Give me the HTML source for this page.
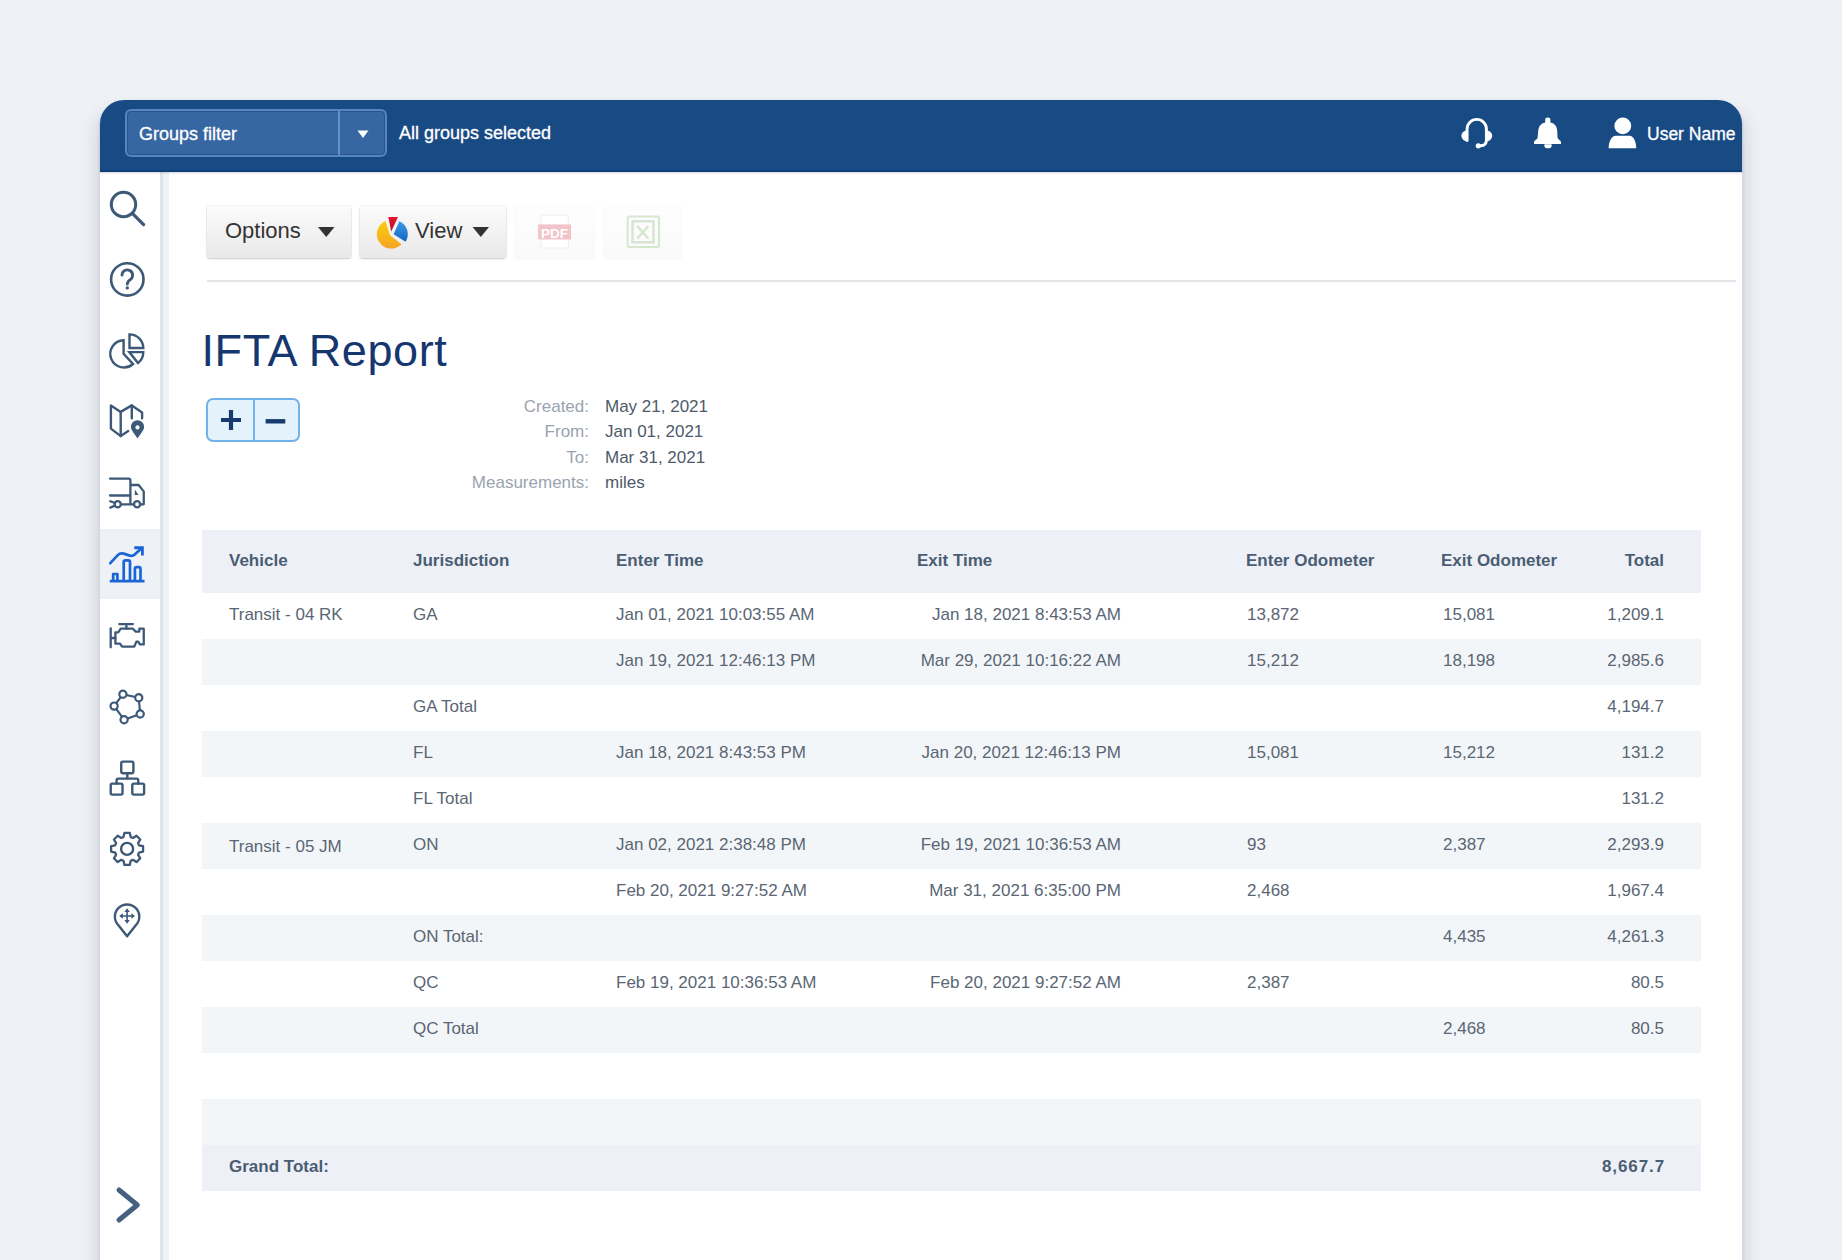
<!DOCTYPE html>
<html><head><meta charset="utf-8">
<style>
*{box-sizing:border-box;margin:0;padding:0}
html,body{width:1842px;height:1260px;overflow:hidden;background:#eef1f6;font-family:"Liberation Sans",sans-serif}
.abs{position:absolute}
#win{position:absolute;left:100px;top:100px;width:1642px;height:1200px;background:#fff;border-radius:24px 24px 0 0;box-shadow:-8px 8px 18px -4px rgba(50,60,80,0.13),8px 8px 18px -4px rgba(50,60,80,0.13),-2px 4px 4px -1px rgba(50,60,80,0.07),2px 4px 4px -1px rgba(50,60,80,0.07)}
#top{position:absolute;left:0;top:0;width:1642px;height:72px;background:#184a84;border-radius:24px 24px 0 0;box-shadow:inset 0 -2px 0 #0f3f7b,0 1px 2px rgba(30,40,60,0.22);z-index:2}
#gf{position:absolute;left:25px;top:9px;width:262px;height:48px;background:#3767a3;border:2px solid #5585bf;border-radius:6px;box-shadow:inset 0 0 0 1px rgba(20,50,100,0.35)}
#gfdiv{position:absolute;left:211px;top:0;width:2px;height:44px;background:#6790c4}
.wt{color:#fff;font-size:18px;position:absolute;white-space:nowrap;line-height:20px;-webkit-text-stroke:0.3px #fff}
#side{position:absolute;left:0;top:72px;width:60px;height:1128px;background:#fff}
#stripe1{position:absolute;left:60px;top:72px;width:3px;height:1128px;background:#dfe4eb}
#stripe2{position:absolute;left:63px;top:72px;width:6px;height:1128px;background:#edf1f8}
#active{position:absolute;left:0;top:429px;width:60px;height:70px;background:#eef1f6}
.ic{position:absolute;left:0;width:60px;height:60px}
.btn{position:absolute;top:106px;height:52px;border-radius:3px;background:linear-gradient(#fbfbfb,#e9e9e9);box-shadow:0 1px 2px rgba(0,0,0,0.18),0 0 0 1px rgba(0,0,0,0.04)}
.btxt{position:absolute;font-size:22px;color:#333;white-space:nowrap;line-height:24px}
#sep{position:absolute;left:107px;top:180px;width:1529px;height:2px;background:#e3e5e9;box-shadow:0 1px 1px rgba(0,0,0,0.025)}
#title{position:absolute;left:101.5px;top:225px;font-size:45px;letter-spacing:0.6px;color:#15366f;white-space:nowrap;line-height:52px}
#pm{position:absolute;left:106px;top:298px;width:94px;height:44px;border:2px solid #72b2e8;border-radius:7px;background:#e4f2fb}
#pmdiv{position:absolute;left:45px;top:0;width:2px;height:40px;background:#72b2e8}
.ml{position:absolute;font-size:17px;color:#9aa4b0;white-space:nowrap;text-align:right;width:200px;line-height:20px;margin-top:1px;margin-left:1px}
.mv{position:absolute;font-size:17px;color:#4e5a69;white-space:nowrap;line-height:20px;margin-top:1px}
#tbl{position:absolute;left:102px;top:430px;width:1499px}
.row{position:relative;height:46px;width:1499px}
.row span{position:absolute;top:0;line-height:44px;font-size:17px;color:#5a6674;white-space:nowrap}
.hd{height:63px;background:#edf1f7}
.hd span{line-height:61px;font-weight:bold;color:#4b5d72}
.g{background:#f3f6f8}
.gt{background:#edf1f7}
.gt span{font-weight:bold;color:#4b5d72}
</style></head><body>
<div id="win">
  <div id="top">
    <div id="gf"><div id="gfdiv"></div>
      <div class="wt" style="left:12px;top:13px">Groups filter</div>
      <svg class="abs" style="left:230px;top:19px" width="12" height="9" viewBox="0 0 12 9"><path d="M0.5 0.5 L11.5 0.5 L6 8 Z" fill="#fff"/></svg>
    </div>
    <div class="wt" style="left:299px;top:23px">All groups selected</div>
    <div class="wt" style="left:1547px;top:23.5px;font-size:17.5px">User Name</div>
  </div>
  <div id="side"></div><div id="stripe1"></div><div id="stripe2"></div>
  <div id="active"></div>

  <div class="btn" style="left:107px;width:144px"><div class="btxt" style="left:18px;top:13px">Options</div></div>
  <div class="btn" style="left:260px;width:146px"><div class="btxt" style="left:55px;top:13px">View</div></div>
  <div class="btn" style="left:415px;width:79px;opacity:0.22"></div>
  <div class="btn" style="left:504px;width:77px;opacity:0.22"></div>
  <div id="sep"></div>
  <div id="title">IFTA Report</div>
  <div id="pm"><div id="pmdiv"></div></div>

  <div class="ml" style="left:288px;top:296px">Created:</div>
  <div class="ml" style="left:288px;top:321px">From:</div>
  <div class="ml" style="left:288px;top:347px">To:</div>
  <div class="ml" style="left:288px;top:372px">Measurements:</div>
  <div class="mv" style="left:505px;top:296px">May 21, 2021</div>
  <div class="mv" style="left:505px;top:321px">Jan 01, 2021</div>
  <div class="mv" style="left:505px;top:347px">Mar 31, 2021</div>
  <div class="mv" style="left:505px;top:372px">miles</div>

  <div id="tbl">
<div class="row hd"><span style="left:27px">Vehicle</span><span style="left:211px">Jurisdiction</span><span style="left:414px">Enter Time</span><span style="left:715px">Exit Time</span><span style="left:1044px">Enter Odometer</span><span style="left:1239px">Exit Odometer</span><span style="right:37px">Total</span></div>
<div class="row "><span style="left:27px">Transit - 04 RK</span><span style="left:211px">GA</span><span style="left:414px">Jan 01, 2021 10:03:55 AM</span><span style="right:580px">Jan 18, 2021 8:43:53 AM</span><span style="left:1045px">13,872</span><span style="left:1241px">15,081</span><span style="right:37px">1,209.1</span></div>
<div class="row g"><span style="left:414px">Jan 19, 2021 12:46:13 PM</span><span style="right:580px">Mar 29, 2021 10:16:22 AM</span><span style="left:1045px">15,212</span><span style="left:1241px">18,198</span><span style="right:37px">2,985.6</span></div>
<div class="row "><span style="left:211px">GA Total</span><span style="right:37px">4,194.7</span></div>
<div class="row g"><span style="left:211px">FL</span><span style="left:414px">Jan 18, 2021 8:43:53 PM</span><span style="right:580px">Jan 20, 2021 12:46:13 PM</span><span style="left:1045px">15,081</span><span style="left:1241px">15,212</span><span style="right:37px">131.2</span></div>
<div class="row "><span style="left:211px">FL Total</span><span style="right:37px">131.2</span></div>
<div class="row g"><span style="left:27px;top:2px">Transit - 05 JM</span><span style="left:211px">ON</span><span style="left:414px">Jan 02, 2021 2:38:48 PM</span><span style="right:580px">Feb 19, 2021 10:36:53 AM</span><span style="left:1045px">93</span><span style="left:1241px">2,387</span><span style="right:37px">2,293.9</span></div>
<div class="row "><span style="left:414px">Feb 20, 2021 9:27:52 AM</span><span style="right:580px">Mar 31, 2021 6:35:00 PM</span><span style="left:1045px">2,468</span><span style="right:37px">1,967.4</span></div>
<div class="row g"><span style="left:211px">ON Total:</span><span style="left:1241px">4,435</span><span style="right:37px">4,261.3</span></div>
<div class="row "><span style="left:211px">QC</span><span style="left:414px">Feb 19, 2021 10:36:53 AM</span><span style="right:580px">Feb 20, 2021 9:27:52 AM</span><span style="left:1045px">2,387</span><span style="right:37px">80.5</span></div>
<div class="row g"><span style="left:211px">QC Total</span><span style="left:1241px">2,468</span><span style="right:37px">80.5</span></div>
<div class="row"></div>
<div class="row g"></div>
<div class="row gt"><span style="left:27px">Grand Total:</span><span style="right:36px;letter-spacing:0.9px">8,667.7</span></div>
  </div>
</div>
<svg id="icons" style="position:absolute;left:0;top:0;pointer-events:none;z-index:5" width="1842" height="1260">
<g fill="none" stroke="#3d5977" stroke-width="2.5" stroke-linecap="round" stroke-linejoin="round">
  <!-- search -->
  <circle cx="123.5" cy="204.5" r="12.2" stroke-width="3"/>
  <path d="M132.6 213.6 L143.6 224.6" stroke-width="3.2"/>
  <!-- help -->
  <circle cx="127.3" cy="279.4" r="16.2" stroke-width="2.6"/>
  <path d="M122 275.2 A5.3 5.3 0 1 1 130.6 279.3 C128.3 280.8 127.3 281.9 127.3 284.2" stroke-width="2.8"/>
  <circle cx="127.3" cy="287.9" r="1.7" fill="#3d5977" stroke="none"/>
  <!-- pie -->
  <path d="M123.6 340.3 V353.7 L133.0 364.0 A13.6 13.6 0 1 1 123.6 340.3 Z" stroke-linejoin="miter" stroke-width="2.4"/>
  <path d="M129.5 334.4 V348 H143.3 A13.7 13.7 0 0 0 129.5 334.4 Z" stroke-linejoin="miter" stroke-width="2.4"/>
  <path d="M129.3 352.1 H143.3 A14 14 0 0 1 138.0 363.1 Z" stroke-linejoin="miter" stroke-width="2.4"/>
  <!-- map -->
  <path d="M128.2 431.1 L120.7 436.1 L110.9 428.6 V405.4 L120.7 411.9 L131.8 405.4 L142.1 412.6 V418.3" stroke-width="2.4"/>
  <path d="M120.7 411.9 V436.1 M131.8 405.4 V418.3" stroke-width="2.4"/>
  <!-- truck -->
  <path d="M110 478.6 H128.6 Q130.4 478.6 130.4 480.4 V503.9" stroke-width="2.3"/>
  <path d="M110 495.5 H130" stroke-width="2.3"/>
  <path d="M131 485 H138.6 L143.75 491.4 V504.3 H140.3" stroke-width="2.3"/>
  <path d="M121 504.3 H134" stroke-width="2.3"/>
  <circle cx="117.7" cy="504.3" r="3.1" stroke-width="2.3"/>
  <circle cx="137.1" cy="504.3" r="3.1" stroke-width="2.3"/>
  <path d="M110.3 501.2 L115 503 M110.3 507.6 L115 505.6" stroke-width="2.3"/>
  <!-- engine -->
  <path d="M110.7 628.4 V647.3 M110.7 638 H115.4 M119.3 624.1 H132.9 M126.4 624.1 V628.7" stroke-width="2.3"/>
  <path d="M115.4 643.7 V632.3 H118.2 L120.7 628.7 H132.9 L135.7 631.6 H139.3 V628.7 H143.75 V644.4 H140 L138.2 641.6 H136.4 L134.3 646.6 H122.1 L120 643.7 Z" stroke-width="2.3"/>
  <!-- network -->
  <path d="M122.9 694.2 L138.75 697.75 L140.2 714 L124.1 719.7 L114.1 706.1 Z" stroke-width="2.2"/>
  <!-- hierarchy -->
  <rect x="121.25" y="761.6" width="12.15" height="11.6" rx="1.6" stroke-width="2.4"/>
  <rect x="110.7" y="783.6" width="11.8" height="11" rx="1.6" stroke-width="2.4"/>
  <rect x="132.3" y="783.6" width="11.8" height="11" rx="1.6" stroke-width="2.4"/>
  <path d="M127.3 773.2 V778.6 M116.6 783.6 V780.2 Q116.6 778.6 118.2 778.6 H136.8 Q138.2 778.6 138.2 780.2 V783.6" stroke-width="2.4"/>
  <!-- gear -->
  <path d="M123.47 837.04 L124.43 832.92 L129.77 832.92 L130.73 837.04 A12.4 12.4 0 0 1 132.92 837.95 L136.51 835.71 L140.29 839.49 L138.05 843.08 A12.4 12.4 0 0 1 138.96 845.27 L143.08 846.23 L143.08 851.57 L138.96 852.53 A12.4 12.4 0 0 1 138.05 854.72 L140.29 858.31 L136.51 862.09 L132.92 859.85 A12.4 12.4 0 0 1 130.73 860.76 L129.77 864.88 L124.43 864.88 L123.47 860.76 A12.4 12.4 0 0 1 121.28 859.85 L117.69 862.09 L113.91 858.31 L116.15 854.72 A12.4 12.4 0 0 1 115.24 852.53 L111.12 851.57 L111.12 846.23 L115.24 845.27 A12.4 12.4 0 0 1 116.15 843.08 L113.91 839.49 L117.69 835.71 L121.28 837.95 A12.4 12.4 0 0 1 123.47 837.04 Z" stroke-width="2.3"/>
  <circle cx="127.1" cy="848.9" r="6.0" stroke-width="2.4"/>
  <!-- pin -->
  <path d="M127.1 936.3 L118.2 925 A12.2 12.2 0 1 1 136 925 Z" stroke-width="2.4"/>
  <path d="M127.1 911 V921 M122 916 H132.2" stroke-width="1.6"/>
  <!-- chevron -->
  <path d="M119 1190 L137.3 1205 L119 1220" stroke="#46617f" stroke-width="5"/>
</g>
<g fill="#fff" stroke="#3d5977" stroke-width="2.2">
  <circle cx="122.9" cy="694.2" r="3.6"/>
  <circle cx="138.75" cy="697.75" r="3.6"/>
  <circle cx="140.2" cy="714" r="3.6"/>
  <circle cx="124.1" cy="719.7" r="3.6"/>
  <circle cx="114.1" cy="706.1" r="3.6"/>
</g>
<!-- map pin filled -->
<path d="M137.5 439.6 L132 431.5 A7.2 7.2 0 1 1 143 431.5 Z" fill="#3d5977" stroke="#fff" stroke-width="1.2"/>
<circle cx="137.5" cy="427.4" r="2.1" fill="#fff"/>
<!-- truck window -->
<path d="M134.8 489.5 L138.6 494.9 H134.8 Z" fill="#3d5977"/>
<!-- pin arrows -->
<g fill="#3d5977">
  <path d="M127.1 908.3 L124.4 912 H129.8 Z M127.1 923.8 L124.4 920 H129.8 Z M119.2 916 L122.8 913.3 V918.7 Z M135 916 L131.4 913.3 V918.7 Z"/>
</g>
<!-- chart (active) -->
<g fill="none" stroke="#1a66d6" stroke-width="2.7" stroke-linejoin="round" stroke-linecap="round">
  <path d="M109.8 581.2 H144.5" stroke-linecap="butt"/>
  <path d="M113.2 580 V574 H117.4 V580"/>
  <path d="M123.7 580 V562 Q123.7 560.3 125.4 560.3 H128.3 Q130 560.3 130 562 V580"/>
  <path d="M134.9 580 V568.8 Q134.9 567.2 136.5 567.2 H139 Q140.5 567.2 140.5 568.8 V580"/>
  <path d="M110.3 563.2 L117.8 555.2 Q120.2 552.6 123.6 553.6 L129.8 555.6 Q132.6 556.6 134.7 554.5 L141.8 548"/>
</g>
<path d="M134.3 546.3 H143.8 V555.6 L141 555.6 V549.2 H134.3 Z" fill="#1a66d6"/>
</svg>
<svg id="icons2" style="position:absolute;left:0;top:0;pointer-events:none;z-index:5" width="1842" height="1260">
<!-- headset -->
<g fill="none" stroke="#fff" stroke-width="2.9" stroke-linecap="round">
  <path d="M1467.1 140.5 V129 A9.65 9.65 0 0 1 1486.4 129 V140 Q1486.4 145.7 1480.6 145.7 H1478.5"/>
</g>
<path d="M1467.8 130.3 C1464 130.3 1461.4 133.2 1461.4 135.8 C1461.4 138.6 1464 141.5 1467.8 141.5 Z" fill="#fff"/>
<path d="M1485.8 130.3 C1489.6 130.3 1492.2 133.2 1492.2 135.8 C1492.2 138.6 1489.6 141.5 1485.8 141.5 Z" fill="#fff"/>
<circle cx="1478.3" cy="145.8" r="2.6" fill="#fff"/>
<!-- bell -->
<path d="M1545.2 122.5 V120 Q1545.2 117.6 1547.8 117.6 Q1550.4 117.6 1550.4 120 V122.5 C1555 123.5 1557 126.5 1557.2 131 L1557.6 138 C1558 139.5 1561 140.5 1561 142 V144 H1534 V142 C1534 140.5 1537.2 139.5 1537.6 138 L1538.2 131 C1538.6 126.5 1540.6 123.5 1545.2 122.5 Z" fill="#fff"/>
<path d="M1544.4 144.2 H1551.6 V146 Q1551.6 148.3 1548 148.3 Q1544.4 148.3 1544.4 146 Z" fill="#fff"/>
<!-- user -->
<circle cx="1622.8" cy="125.9" r="8.4" fill="#fff"/>
<path d="M1615.6 135.7 H1629.8 C1633 135.7 1636.2 141 1636.2 148.2 H1608.6 C1608.6 141 1612 135.7 1615.6 135.7 Z" fill="#fff"/>
<!-- options arrow -->
<path d="M318 227 H334.5 L326.25 237 Z" fill="#333"/>
<path d="M472.6 227 H489 L480.8 237 Z" fill="#333"/>
<!-- view pie -->
<defs>
  <linearGradient id="gy" x1="0" y1="0" x2="0" y2="1"><stop offset="0" stop-color="#f6cf0a"/><stop offset="1" stop-color="#f7a326"/></linearGradient>
  <linearGradient id="gb" x1="0" y1="0" x2="0" y2="1"><stop offset="0" stop-color="#3d9be6"/><stop offset="1" stop-color="#1266c4"/></linearGradient>
  <linearGradient id="gr" x1="0" y1="0" x2="0" y2="1"><stop offset="0" stop-color="#ea1431"/><stop offset="1" stop-color="#b9101f"/></linearGradient>
</defs>
<path d="M385.57 220.94 L390 235.2 L401.56 244.2 A14.4 14.4 0 1 1 385.57 220.94 Z" fill="url(#gy)"/>
<path d="M388.3 217 H398 L391.2 231.5 Z" fill="url(#gr)"/>
<path d="M393.6 234.2 L399.38 221.23 A14.2 14.2 0 0 1 405.64 241.72 Z" fill="url(#gb)"/>
<!-- plus minus -->
<path d="M221 420 H241 M231 410 V430" stroke="#183b6e" stroke-width="4.2"/>
<path d="M265.6 421.3 H285.3" stroke="#183b6e" stroke-width="4.4"/>
</svg>
<svg id="icons3" style="position:absolute;left:0;top:0;pointer-events:none;z-index:5" width="1842" height="1260">
<rect x="541" y="215" width="27.3" height="33" fill="#fff" stroke="#eeeeee" stroke-width="1"/>
<rect x="538.1" y="224.4" width="32.9" height="15.1" fill="#f3c3ca"/>
<text x="554.6" y="237.6" text-anchor="middle" font-family="Liberation Sans" font-weight="bold" font-size="13.5" fill="#fff">PDF</text>
<rect x="627.7" y="216.5" width="31.3" height="30.5" rx="1.5" fill="none" stroke="#d5e8cd" stroke-width="2"/>
<rect x="632.5" y="221.3" width="21" height="21" fill="none" stroke="#d8e3d3" stroke-width="2.4"/>
<path d="M637.3 226 L648.3 238.5 M648.3 226 L637.3 238.5" stroke="#d3e7cc" stroke-width="2.4"/>
</svg>
</body></html>
